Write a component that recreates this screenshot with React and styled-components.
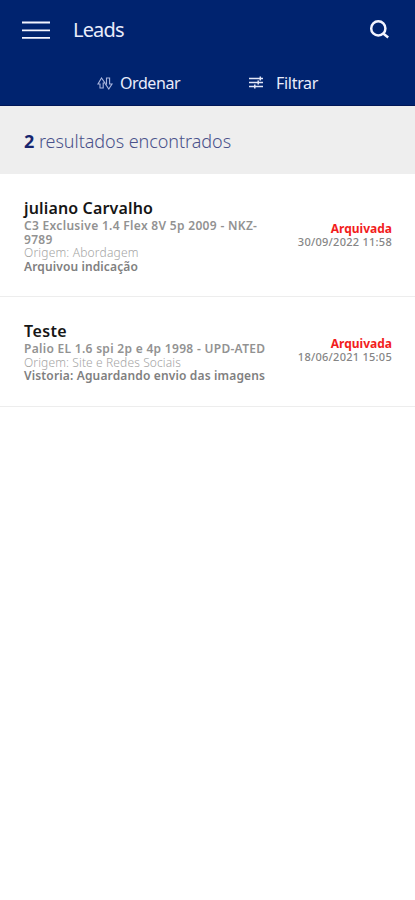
import React from "react";
import styled, { createGlobalStyle } from "styled-components";

const GlobalStyle = createGlobalStyle`
  * { box-sizing: border-box; }
  body { margin: 0; background: #fff; font-family: "Noto Sans", "Open Sans", sans-serif; }
`;

const Screen = styled.main`
  width: 100%;
  min-height: 900px;
  background: #fff;
`;
const Header = styled.header`
  height: 106px;
  background: #00236f;
  border-bottom: 1px solid #001657;
  color: #e9ecfb;
`;
const TopBar = styled.div`
  display: flex;
  align-items: center;
  height: 60px;
  padding: 0 25px 0 22px;
`;
const Title = styled.h1`
  margin: 0 auto 0 23px;
  font-size: 20px;
  font-weight: 400;
  line-height: 28px;
  letter-spacing: -0.85px;
`;
const IconButton = styled.button`
  display: flex;
  padding: 0;
  border: 0;
  background: none;
  color: #f3f4ff;
`;
const Actions = styled.nav`
  display: flex;
  height: 45px;
  padding-left: 97px;
`;
const Action = styled.button`
  display: flex;
  align-items: center;
  gap: ${(p) => p.$gap}px;
  width: 151px;
  height: 45px;
  padding: 0;
  border: 0;
  background: none;
  color: #e9ecfb;
  font: 400 16px/22px "Noto Sans", sans-serif;
  letter-spacing: ${(p) => p.$track}px;
`;
const Summary = styled.p`
  height: 68px;
  margin: 0;
  padding: 1px 24px 0;
  background: #eee;
  color: #4a528b;
  font-size: 18px;
  font-weight: 300;
  line-height: 68px;
  letter-spacing: -0.05px;
  b { color: #17256f; font-weight: 700; }
`;
const Row = styled.article`
  display: flex;
  justify-content: space-between;
  height: ${(p) => p.$height}px;
  padding: 24px 23px 0 24px;
  border-bottom: 1px solid #ededed;
`;
const Info = styled.div`
  width: 250px;
  white-space: nowrap;
`;
const Name = styled.h2`
  margin: 0;
  color: #161616;
  font-size: 16px;
  font-weight: 600;
  line-height: 21px;
  letter-spacing: ${(p) => p.$track}px;
`;
const Line = styled.div`
  color: ${(p) => p.$color || "#929292"};
  font-size: 12px;
  font-weight: ${(p) => (p.$light ? 300 : 600)};
  line-height: 13.7px;
  letter-spacing: ${(p) => p.$track}px;
`;
const Status = styled.div`
  display: flex;
  flex-direction: column;
  align-items: flex-end;
  padding-top: ${(p) => p.$top}px;
  white-space: nowrap;
`;
const Badge = styled.strong`
  color: #f21d1d;
  font-size: 12px;
  font-weight: 700;
  line-height: 13px;
`;
const Stamp = styled.time`
  color: #858585;
  font-size: 11px;
  font-weight: 500;
  line-height: 14px;
  letter-spacing: 0.27px;
`;

const MenuIcon = () => (
  <svg width="28" height="20" viewBox="0 0 28 20" stroke="currentColor" strokeWidth="1.9">
    <path d="M0 2.5H28M0 10.4H28M0 17.9H28" />
  </svg>
);
const SearchIcon = () => (
  <svg width="21" height="20" viewBox="0 0 21 20" fill="none" stroke="currentColor" strokeWidth="2.5">
    <circle cx="9.3" cy="8.4" r="7.1" />
    <path d="M14.2 13.4L19.2 17.4" />
  </svg>
);
const SortIcon = () => (
  <svg width="17" height="14" viewBox="0 0 17 14" fill="none" stroke="#a9b5dd" strokeWidth="1.1">
    <path d="M3 12V8H1L4.5 2L8 7H6.2V12Z" />
    <path d="M9.5 2H12.6V8H15L11.8 13L8.4 8H9.5Z" />
  </svg>
);
const FilterIcon = () => (
  <svg width="16" height="13" viewBox="0 0 16 13" stroke="#e3e7f8" strokeWidth="1.5">
    <path d="M1 2.5H15M1 6.5H15M1 10.5H15M12.3 .5V4.5M10.2 4.5V8.5M6.8 8.5V12.5" />
  </svg>
);

const leads = [
  {
    name: "juliano Carvalho", nameTrack: 0.15, height: 123, top: 24,
    lines: [
      { text: "C3 Exclusive 1.4 Flex 8V 5p 2009 - NKZ-", track: 0.31 },
      { text: "9789", track: 0.3 },
      { text: "Origem: Abordagem", track: 0.18, light: true, color: "#a5a5a5" },
      { text: "Arquivou indicação", track: 0.12, color: "#808080" },
    ],
    date: "30/09/2022 11:58",
  },
  {
    name: "Teste", nameTrack: 0.4, height: 110, top: 16,
    lines: [
      { text: "Palio EL 1.6 spi 2p e 4p 1998 - UPD-ATED", track: 0.3 },
      { text: "Origem: Site e Redes Sociais", track: 0.12, light: true, color: "#a5a5a5" },
      { text: "Vistoria: Aguardando envio das imagens", track: 0.15, color: "#808080" },
    ],
    date: "18/06/2021 15:05",
  },
];

export default function App() {
  return (
    <Screen>
      <GlobalStyle />
      <Header>
        <TopBar>
          <IconButton aria-label="Menu"><MenuIcon /></IconButton>
          <Title>Leads</Title>
          <IconButton aria-label="Buscar"><SearchIcon /></IconButton>
        </TopBar>
        <Actions>
          <Action $gap={6} $track={-0.42}><SortIcon />Ordenar</Action>
          <Action $gap={12} $track={-0.3}><FilterIcon />Filtrar</Action>
        </Actions>
      </Header>
      <Summary><b>2</b> resultados encontrados</Summary>
      {leads.map((lead) => (
        <Row key={lead.name} $height={lead.height}>
          <Info>
            <Name $track={lead.nameTrack}>{lead.name}</Name>
            {lead.lines.map((l) => (
              <Line key={l.text} $track={l.track} $light={l.light} $color={l.color}>{l.text}</Line>
            ))}
          </Info>
          <Status $top={lead.top}>
            <Badge>Arquivada</Badge>
            <Stamp>{lead.date}</Stamp>
          </Status>
        </Row>
      ))}
    </Screen>
  );
}
